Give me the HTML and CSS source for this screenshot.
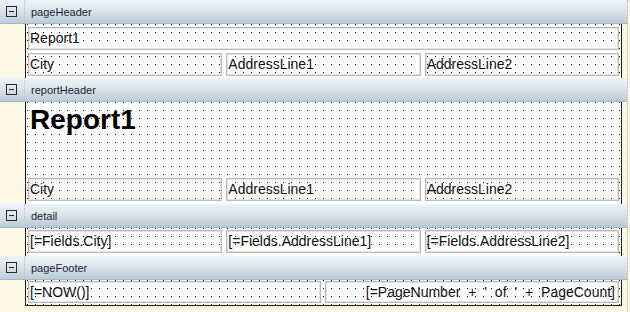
FILE: index.html
```html
<!DOCTYPE html>
<html lang="en">
<head>
    <meta charset="UTF-8">
    <title>Report Designer</title>
    <link rel="stylesheet" href="styles.css">
</head>
<body>
    <div class="designer">
        <!-- pageHeader -->
        <div class="band-head">
            <div class="toggle"><span class="minus"></span></div>
            <span class="band-name">pageHeader</span>
        </div>
        <div class="band-body">
            <div class="gutter"></div>
            <div class="surface page-header">
                <div class="row"><div class="field">Report1</div></div>
                <div class="row">
                    <div class="field">City</div>
                    <div class="field">AddressLine1</div>
                    <div class="field">AddressLine2</div>
                </div>
            </div>
        </div>

        <!-- reportHeader -->
        <div class="band-head">
            <div class="toggle"><span class="minus"></span></div>
            <span class="band-name">reportHeader</span>
        </div>
        <div class="band-body">
            <div class="gutter"></div>
            <div class="surface report-header">
                <div class="title">Report1</div>
                <div class="row">
                    <div class="field">City</div>
                    <div class="field">AddressLine1</div>
                    <div class="field">AddressLine2</div>
                </div>
            </div>
        </div>

        <!-- detail -->
        <div class="band-head">
            <div class="toggle"><span class="minus"></span></div>
            <span class="band-name">detail</span>
        </div>
        <div class="band-body">
            <div class="gutter"></div>
            <div class="surface detail">
                <div class="row">
                    <div class="field">[=Fields.City]</div>
                    <div class="field">[=Fields.AddressLine1]</div>
                    <div class="field">[=Fields.AddressLine2]</div>
                </div>
            </div>
        </div>

        <!-- pageFooter -->
        <div class="band-head">
            <div class="toggle"><span class="minus"></span></div>
            <span class="band-name">pageFooter</span>
        </div>
        <div class="band-body">
            <div class="gutter"></div>
            <div class="surface page-footer">
                <div class="row">
                    <div class="field">[=NOW()]</div>
                    <div class="field right">[=PageNumber + ' of ' + PageCount]</div>
                </div>
            </div>
        </div>
    </div>
</body>
</html>
```

FILE: styles.css
```css
body {
    margin: 0;
    background: #fdf8e4;
    font-family: "Liberation Sans", Arial, sans-serif;
    height: 312px;
    overflow: hidden;
}

.designer {
    width: 627px;
    height: 312px;
    border-right: 1px dotted #a8a8a8;
}

.band-head {
    height: 24px;
    display: flex;
    align-items: center;
    background: linear-gradient(to bottom, #eef3f7 0%, #dbe5ec 45%, #b9cbd8 100%);
    border-bottom: 1px solid #a4b8c6;
    box-sizing: border-box;
}

.toggle {
    width: 25px;
    height: 100%;
    display: flex;
    align-items: center;
    justify-content: center;
    border-right: 1px dotted #b4c0ca;
    box-sizing: border-box;
}

.minus {
    width: 9px;
    height: 9px;
    border: 1px solid #2a2a2a;
    position: relative;
    margin-left: -1px;
}

.minus::after {
    content: "";
    position: absolute;
    left: 2px;
    top: 4px;
    width: 5px;
    height: 1px;
    background: #2a2a2a;
}

.band-name {
    font-size: 11px;
    color: #1e1e3a;
    padding-left: 6px;
}

.band-body {
    display: flex;
}

.gutter {
    width: 25px;
    flex: none;
}

.surface {
    width: 597px;
    box-sizing: border-box;
    border-left: 1px solid #1a1a1a;
    border-right: 1px solid #1a1a1a;
    padding: 3px 2px 2px;
    display: flex;
    flex-direction: column;
    gap: 3px;
    background-color: #fff;
    background-image:
        linear-gradient(90deg, #fff 7px, transparent 7px),
        linear-gradient(#fff 7px, #000 7px);
    background-size: 8px 8px;
    background-position: 2px 1px;
}

.row {
    display: flex;
    gap: 4px;
}

.field {
    flex: 1;
    height: 23px;
    box-sizing: border-box;
    border: 1px solid #b9b9b9;
    box-shadow: inset 0 0 0 1px #e4e4e4;
    font-size: 14px;
    line-height: 21px;
    padding-left: 1px;
    color: #111;
    word-spacing: 2px;
    white-space: nowrap;
    overflow: hidden;
}

.field.right {
    text-align: right;
    padding: 0 3px 0 0;
    word-spacing: 4px;
}

.report-header {
    height: 102px;
    justify-content: space-between;
    padding-bottom: 3px;
}

.title {
    font-size: 28px;
    font-weight: bold;
    line-height: 29px;
    padding-left: 2px;
    color: #000;
}

.detail {
    height: 28px;
    padding-top: 2px;
}

.page-footer {
    height: 26px;
    padding-top: 1px;
    border-bottom: 1px solid #1a1a1a;
}

.page-footer .field {
    height: 22px;
    line-height: 20px;
}
```
